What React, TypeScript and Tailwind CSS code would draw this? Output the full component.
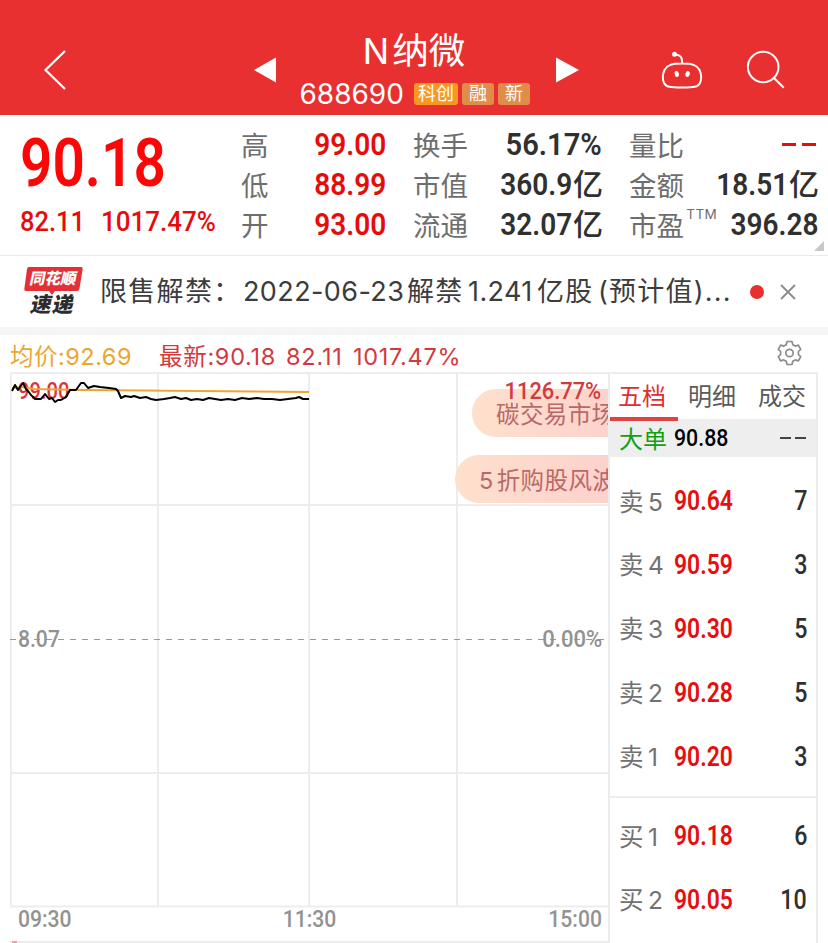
import type { ReactNode } from 'react'
import clsx from 'clsx'

const stats = [
  [
    { label: '高', value: '99.00', color: 'text-[#e60c0c]' },
    { label: '低', value: '88.99', color: 'text-[#e60c0c]' },
    { label: '开', value: '93.00', color: 'text-[#e60c0c]' },
  ],
  [
    { label: '换手', value: '56.17%', color: 'text-[#303030]' },
    { label: '市值', value: '360.9', unit: '亿', color: 'text-[#303030]' },
    { label: '流通', value: '32.07', unit: '亿', color: 'text-[#303030]' },
  ],
  [
    { label: '量比', value: '--', color: 'text-[#e60c0c]' },
    { label: '金额', value: '18.51', unit: '亿', color: 'text-[#303030]' },
    { label: '市盈', note: 'TTM', value: '396.28', color: 'text-[#303030]' },
  ],
]

const asks = [
  { side: '卖', level: 5, price: '90.64', volume: 7 },
  { side: '卖', level: 4, price: '90.59', volume: 3 },
  { side: '卖', level: 3, price: '90.30', volume: 5 },
  { side: '卖', level: 2, price: '90.28', volume: 5 },
  { side: '卖', level: 1, price: '90.20', volume: 3 },
]

const bids = [
  { side: '买', level: 1, price: '90.18', volume: 6 },
  { side: '买', level: 2, price: '90.05', volume: 10 },
]

const pricePoints =
  '2,19 5,13 8,18 10,15 13,11 16,17 18,19 21,23 25,27 31,27 35,22 39,27 42,26 45,30 48,28 51,28 56,25 60,18 66,18 71,11 74,11 78,16 84,14 90,15 99,16 106,17 108,19 111,26 115,24 121,25 124,24 130,26 136,25 141,27 146,28 154,27 160,26 165,25 171,27 176,26 181,28 187,27 193,28 199,26 205,27 211,28 218,27 225,28 232,26 239,27 247,26 254,27 262,27 270,28 278,27 286,26 289,25 293,27 299,27'

function Num({ children, className }: { children: ReactNode; className?: string }) {
  return (
    <span className={clsx("inline-block whitespace-nowrap font-['Roboto'] leading-none", className)}>
      {children}
    </span>
  )
}

function Header() {
  return (
    <header className="flex h-[115px] items-center bg-[#e93030] text-white">
      <div className="w-[254px] pl-[43px] pt-6">
        <svg width="26" height="42" viewBox="0 0 26 42" fill="none" stroke="currentColor" strokeWidth="2.2">
          <path d="M22 2 2.5 21 22 40" />
        </svg>
      </div>
      <svg className="mt-6" width="23" height="26" fill="currentColor">
        <path d="M0 13 22 0.500v25z" />
      </svg>
      <div className="flex w-[279px] flex-col items-center pt-[28px]">
        <div className="mr-[5px] flex items-center leading-[44px]">
          <span className="mr-[3px] text-[35px]">N</span>
          <span className="text-[36.5px]">纳微</span>
        </div>
        <div className="flex h-[42px] w-[232px] items-center gap-1">
          <span className="-ml-[1px] mr-1.5 text-[28px] leading-none">688690</span>
          <span className="flex h-[22px] w-11 shrink-0 items-center justify-center rounded-[3px] bg-[#f89820] text-[18px] leading-none">科创</span>
          <span className="flex h-[22px] w-8 shrink-0 items-center justify-center rounded-[3px] bg-[#e08c4b] text-[18px] leading-none">融</span>
          <span className="flex h-[22px] w-8 shrink-0 items-center justify-center rounded-[3px] bg-[#e08c4b] text-[18px] leading-none">新</span>
        </div>
      </div>
      <svg className="mt-6" width="24" height="26" fill="currentColor">
        <path d="M23 13 0 0.500v25z" />
      </svg>
      <svg className="ml-[81px] mt-6" width="42" height="40" viewBox="661 51 42 40" fill="none" stroke="currentColor" strokeWidth="2">
        <path d="M682 64.500c10 0 15 1.500 17.500 6.500 2 4 2.200 10 .5 13-2 4-6 4.500-18 4.500s-16-.5-18-4.500c-1.700-3-1.500-9 .5-13 2.500-5 7.500-6.500 17.500-6.500zM682 64.500c.5-7-2-8.500-7-9" />
        <circle cx="674.5" cy="55.3" r="2.5" fill="currentColor" stroke="none" />
        <ellipse cx="676.8" cy="75" rx="2.1" ry="3" fill="currentColor" stroke="none" transform="rotate(-12 676.8 75)" />
        <ellipse cx="687.6" cy="75" rx="2.1" ry="3" fill="currentColor" stroke="none" transform="rotate(18 687.6 75)" />
      </svg>
      <svg className="ml-[43px] mt-6" width="40" height="40" viewBox="746 50 40 40" fill="none" stroke="currentColor" strokeWidth="2">
        <circle cx="763.2" cy="67" r="15.300" />
        <path d="m774 78 9.800 9.800" />
      </svg>
    </header>
  )
}

function Quote() {
  return (
    <section className="relative flex h-[141px] border-b border-[#e9e9e9] bg-white pt-[9px]">
      <div className="flex w-[241px] flex-col pl-[20px] text-[#fb0707]">
        <Num className="mt-[7px] origin-left scale-x-[.86] text-[66px] font-semibold">90.18</Num>
        <div className="mt-[5px] flex h-10 items-center text-[28.500px] font-medium text-[#e60c0c]">
          <Num className="w-[81px] origin-left scale-x-[.895]">82.11</Num>
          <Num className="origin-left scale-x-[.91]">1017.47%</Num>
        </div>
      </div>
      {stats.map((column, i) => (
        <dl key={i} className={clsx('flex flex-col', i === 0 ? 'mr-[27px] w-[145px]' : i === 1 ? 'mr-[27px] w-[189px]' : 'w-[189px]')}>
          {column.map((item) => (
            <div key={item.label} className="flex h-10 items-center justify-between">
              <dt className="relative pt-[5px] text-[27.500px] leading-none text-[#6e6e6e]">
                {item.label}
                {item.note && <sup className="absolute -right-[33px] top-0 text-[13.500px] leading-none tracking-wide">{item.note}</sup>}
              </dt>
              <dd className={clsx('flex items-center text-[32px] leading-none', item.color)}>
                {item.value === '--' ? (
                  <span className="mr-[2px] flex gap-[6px]" aria-label="--">
                    <i className="h-[3px] w-[14px] bg-current" />
                    <i className="h-[3px] w-[14px] bg-current" />
                  </span>
                ) : (
                  <Num className={clsx('origin-right font-semibold', item.value === '56.17%' ? 'scale-x-[.91]' : 'scale-x-[.875]')}>{item.value}</Num>
                )}
                {item.unit && <span className="-mr-[1px] ml-[1px] text-[30px] font-medium leading-none">{item.unit}</span>}
              </dd>
            </div>
          ))}
        </dl>
      ))}
      <i className="absolute bottom-1 right-1 size-[10px] bg-[#c8c8c8] [clip-path:polygon(100%_0,100%_100%,0_100%)]" />
    </section>
  )
}

function News() {
  return (
    <section className="flex h-[79px] items-center border-b-8 border-[#f5f5f5] bg-white pl-6">
      <div className="flex w-[76px] flex-col">
        <div className="relative flex h-[25px] w-[59px] items-center justify-center">
          <svg className="absolute left-0 top-0" width="59" height="28" fill="#e33036">
            <path d="M5 0h52q2 0 1.700 2l-3.300 20q-.4 2-2.400 2H31l-3 4-3-4H2q-2 0-1.700-2L3 2q.3-2 2-2z" />
          </svg>
          <b className="relative -skew-x-12 text-[15.500px] font-black leading-none text-white">同花顺</b>
        </div>
        <b className="ml-[7px] -skew-x-12 self-start text-[21px] font-black leading-[25px] tracking-[1px] text-[#2c2c2c]">速递</b>
      </div>
      <p className="flex w-[640px] items-center whitespace-nowrap text-[27px] leading-none text-[#3c3c3c]">
        <span className="w-[143px] tracking-[1.3px]">限售解禁：</span>
        <span className="w-[164px] tracking-[.4px]">2022-06-23</span>
        <span className="w-[61px] tracking-[1.3px]">解禁</span>
        <span className="w-[69px] tracking-[.4px]">1.241</span>
        <span className="w-[61px] tracking-[1.3px]">亿股</span>
        <span className="tracking-[1.2px]">(预计值)</span>
        <span className="tracking-[1.2px]">...</span>
      </p>
      <i className="ml-[10px] size-[14px] rounded-full bg-[#e93030]" />
      <svg className="ml-4" width="16" height="16" fill="none" stroke="#8b8b8b" strokeWidth="1.8">
        <path d="m1 1 14 14M15 1 1 15" />
      </svg>
    </section>
  )
}

function Legend() {
  return (
    <div className="flex h-[37px] items-center bg-white pl-[10px] pt-[7px] text-[23.500px] leading-none text-[#d23a3e]">
      <span className="w-[149px] whitespace-nowrap tracking-[.5px] text-[#eba62f]">均价:92.69</span>
      <span className="w-[127px] whitespace-nowrap tracking-[.7px]">最新:90.18</span>
      <span className="w-[67px] tracking-[.8px]">82.11</span>
      <span className="w-[424px] tracking-[.7px]">1017.47%</span>
      <svg className="-mt-[8px]" width="25" height="26" viewBox="-.5 0 25 26" fill="none" stroke="#8d8d8d" strokeWidth="1.700" strokeLinejoin="round">
        <path d="M9.500 1.500h5l.8 3.200 2.400 1.400 3.200-1 2.300 4.200-2.300 2.200v3l2.300 2.200-2.300 4.200-3.200-1-2.400 1.400-.8 3.200h-5l-.8-3.200-2.400-1.400-3.200 1L.8 16.700l2.300-2.200v-3L.8 9.300l2.300-4.200 3.200 1 2.400-1.400z" />
        <circle cx="12" cy="13" r="3.700" />
      </svg>
    </div>
  )
}

function Chart() {
  return (
    <div className="relative ml-[10px] h-[571px] w-[598px] overflow-hidden text-[24px] font-medium text-[#929292]">
      <svg className="absolute inset-0" width="598" height="571" fill="none">
        <path d="M1 1v534M148 1v534M299 1v534M447 1v534M0 1h598M0 133h598M0 401h598M0 534.500h598M0 570h598" stroke="#ededf0" strokeWidth="2" />
        <path d="M0 267.500h598" stroke="#999" strokeDasharray="6 6" />
        <path d="M2 570h5" stroke="#f4a0a0" strokeWidth="2" />
      </svg>
      <div className="absolute left-[462px] top-[17px] h-12 w-[200px] whitespace-nowrap rounded-full bg-linear-to-r from-[#fee0cc] to-[#fccdcd] pl-6 text-[23.500px] font-normal leading-[51px] tracking-[.4px] text-[#b96868]">
        碳交易市场
      </div>
      <div className="absolute left-[445px] top-[83px] h-12 w-[200px] whitespace-nowrap rounded-full bg-linear-to-r from-[#fee0cc] to-[#fccdcd] pl-6 text-[23.500px] font-normal leading-[51px] tracking-[.4px] text-[#b96868]">
        <span className="mr-[3px]">5</span>折购股风波
      </div>
      <Num className="absolute left-[8px] top-[7px] origin-left scale-x-[.84] text-[#d8353b]">99.00</Num>
      <Num className="absolute right-[7px] top-[7px] origin-right scale-x-[.91] text-[#d23a3e]">1126.77%</Num>
      <Num className="absolute left-[8px] top-[255px] origin-left scale-x-[.88]">8.07</Num>
      <Num className="absolute right-[6px] top-[255px] origin-right scale-x-[.92]">0.00%</Num>
      <svg className="absolute inset-0" width="598" height="571" fill="none">
        <path d="M2 16 12 15l12 2 50 1 225 2" stroke="#f0a431" strokeWidth="2" />
        <polyline points={pricePoints} stroke="#000" strokeWidth="2" strokeLinejoin="round" />
      </svg>
      <div className="absolute left-[8px] right-[6px] top-[535px] flex justify-between">
        <Num className="origin-left scale-x-[.88]">09:30</Num>
        <Num className="-ml-[2px] scale-x-[.88]">11:30</Num>
        <Num className="origin-right scale-x-[.88]">15:00</Num>
      </div>
    </div>
  )
}

function OrderRow({ side, level, price, volume }: (typeof asks)[number]) {
  return (
    <li className="flex h-[63.800px] items-center pl-[9px] pr-[9px] text-[27px] leading-none">
      <span className="w-[29px] text-[24.500px] text-[#717171]">{side}</span>
      <span className="w-[26px] text-[24.500px] text-[#717171]">{level}</span>
      <Num className="origin-left scale-x-[.85] font-semibold text-[#e80e0e]">{price}</Num>
      <Num className="ml-auto origin-right scale-x-[.86] font-medium text-[#303030]">{volume}</Num>
    </li>
  )
}

function OrderBook() {
  return (
    <aside className="h-[571px] w-[210px] border-x-2 border-t-2 border-[#ededed] bg-white">
      <div className="flex h-[45px] text-[24px] leading-[46px] text-[#5a5a5a]">
        <span className="relative w-[69px] pl-[8px] text-[#de2d31]">
          五档
          <i className="absolute bottom-[-2px] left-0 h-1 w-[68px] bg-[#dc4444]" />
        </span>
        <span className="w-[69px] pl-[9px]">明细</span>
        <span className="whitespace-nowrap pl-[10px]">成交</span>
      </div>
      <div className="flex h-[38px] items-center bg-[#eee] px-[9px] text-[24.500px] leading-none">
        <span className="w-[55px] pt-[3px] text-[24px] text-[#13a013]">大单</span>
        <Num className="origin-left scale-x-[.87] font-medium text-black">90.88</Num>
        <span className="ml-auto mr-[1px] flex gap-[4px]">
          <i className="h-[2px] w-[11px] bg-[#444]" />
          <i className="h-[2px] w-[11px] bg-[#444]" />
        </span>
      </div>
      <ul className="h-[341px] border-b-2 border-[#ededed] pt-[13px]">
        {asks.map((row) => (
          <OrderRow key={row.level} {...row} />
        ))}
      </ul>
      <ul className="pt-[7px]">
        {bids.map((row) => (
          <OrderRow key={row.level} {...row} />
        ))}
      </ul>
    </aside>
  )
}

export default function App() {
  return (
    <main className="h-[943px] w-[828px] overflow-hidden bg-white font-['Inter','Noto_Sans_CJK_SC',sans-serif]">
      <Header />
      <Quote />
      <News />
      <Legend />
      <div className="flex">
        <Chart />
        <OrderBook />
      </div>
    </main>
  )
}
